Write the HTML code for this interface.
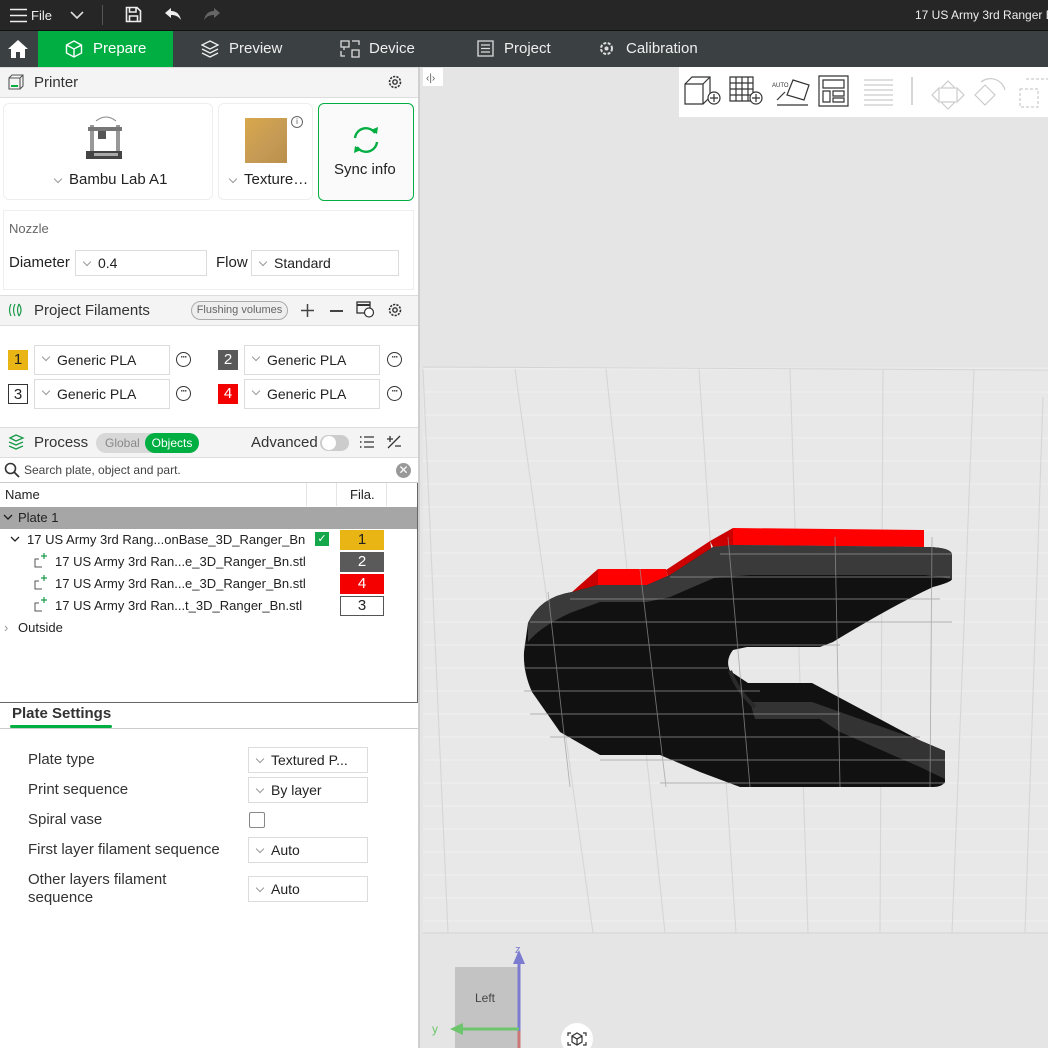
<!DOCTYPE html>
<html><head><meta charset="utf-8"><style>
*{box-sizing:border-box;margin:0;padding:0}
body{width:1048px;height:1048px;overflow:hidden;position:relative;font-family:"Liberation Sans",sans-serif;font-size:14px;color:#222;background:#fff}
.a{position:absolute}
.t{position:absolute;white-space:nowrap}
.inp{position:absolute;border:1px solid #dcdcdc;background:#fff;height:26px;line-height:24px;padding-left:22px;font-size:14px}
.inp:before{content:"";position:absolute;left:8px;top:8px;width:5px;height:5px;border-right:1px solid #999;border-bottom:1px solid #999;transform:rotate(45deg)}
.num{position:absolute;width:20px;height:20px;text-align:center;line-height:20px;font-size:15px}
.dots{position:absolute;width:15px;height:15px;border:1.5px solid #333;border-radius:50%;font-size:9px;line-height:9px;text-align:center;letter-spacing:-1px;font-weight:bold}
.hdr{position:absolute;left:0;width:418px;background:#f4f4f4;border-bottom:1px solid #ddd;border-top:1px solid #ddd}
</style></head><body>
<!-- top bar -->
<div class="a" style="left:0;top:0;width:1048px;height:31px;background:#262626"></div>
<div class="a" style="left:0;top:30px;width:1048px;height:1px;background:#111"></div>
<svg class="a" style="left:10px;top:8px" width="18" height="15"><path d="M0 1.5H17M0 7.5H17M0 13.5H17" stroke="#eee" stroke-width="1.6"/></svg>
<div class="t" style="left:31px;top:8px;color:#eee;font-size:13px">File</div>
<svg class="a" style="left:70px;top:10px" width="14" height="10"><path d="M1 2L7 8L13 2" stroke="#ddd" stroke-width="1.6" fill="none"/></svg>
<div class="a" style="left:102px;top:5px;width:1px;height:20px;background:#555"></div>
<svg class="a" style="left:125px;top:6px" width="17" height="17"><path d="M1.5 1.5H12L15.5 5V15.5H1.5Z M4.5 1.5V6H11V1.5 M4.5 15.5V10H12.5V15.5" stroke="#eee" stroke-width="1.6" fill="none"/></svg>
<svg class="a" style="left:164px;top:7px" width="18" height="14"><path d="M7 1L1 6L7 11V8C11 8 14 9 17 13C16 8 13 4 7 4Z" fill="#eee"/></svg>
<svg class="a" style="left:203px;top:7px" width="18" height="14"><path d="M11 1L17 6L11 11V8C7 8 4 9 1 13C2 8 5 4 11 4Z" fill="#666"/></svg>
<div class="t" style="left:915px;top:8px;color:#eee;font-size:12px">17 US Army 3rd Ranger Ba</div>
<!-- tab bar -->
<div class="a" style="left:0;top:31px;width:1048px;height:36px;background:#3b4143"></div>
<svg class="a" style="left:7px;top:39px" width="22" height="20"><path d="M11 1L1 10H4V19H9V13H13V19H18V10H21Z" fill="#fff"/></svg>
<div class="a" style="left:38px;top:31px;width:135px;height:36px;background:#00ae42"></div>
<svg class="a" style="left:65px;top:40px" width="18" height="18"><path d="M9 1L16.5 5V13L9 17L1.5 13V5Z M1.5 5L9 9L16.5 5 M9 9V17" stroke="#fff" stroke-width="1.4" fill="none"/></svg>
<div class="t" style="left:93px;top:40px;color:#fff;font-size:15px">Prepare</div>
<svg class="a" style="left:201px;top:40px" width="18" height="18"><path d="M9 1L17 5L9 9L1 5Z M1 9L9 13L17 9 M1 13L9 17L17 13" stroke="#eee" stroke-width="1.3" fill="none"/></svg>
<div class="t" style="left:229px;top:40px;color:#eee;font-size:15px">Preview</div>
<svg class="a" style="left:340px;top:40px" width="20" height="18"><path d="M1 1H9V7H1Z M4 7V10 M1 11V16H5 M12 1H19V5 M12 10H19V17H12Z" stroke="#ddd" stroke-width="1.3" fill="none"/></svg>
<div class="t" style="left:369px;top:40px;color:#eee;font-size:15px">Device</div>
<svg class="a" style="left:477px;top:40px" width="17" height="17"><path d="M1 1H16V16H1Z M4 5H13 M4 8.5H13 M4 12H13" stroke="#ddd" stroke-width="1.3" fill="none"/></svg>
<div class="t" style="left:504px;top:40px;color:#eee;font-size:15px">Project</div>
<svg class="a" style="left:599px;top:41px" width="15" height="15"><circle cx="7.5" cy="7.5" r="5.5" stroke="#ddd" stroke-width="2" fill="none" stroke-dasharray="3 1.5"/><circle cx="7.5" cy="7.5" r="2" fill="#ddd"/></svg>
<div class="t" style="left:626px;top:40px;color:#eee;font-size:15px">Calibration</div>

<!-- left panel -->
<div class="a" style="left:418px;top:67px;width:2px;height:981px;background:#cfcfcf"></div>
<div class="hdr" style="top:67px;height:31px"></div>
<svg class="a" style="left:8px;top:74px" width="17" height="16"><path d="M1 4H12V15H1Z M1 4L4 1H15V12L12 15 M12 4L15 1" stroke="#555" stroke-width="1.1" fill="none"/><path d="M3 12H10" stroke="#00ae42" stroke-width="2"/></svg>
<div class="t" style="left:34px;top:74px;font-size:15px;color:#333">Printer</div>
<svg class="a" style="left:387px;top:74px" width="16" height="16"><circle cx="8" cy="8" r="5.5" stroke="#333" stroke-width="1.6" fill="none" stroke-dasharray="2.2 1.2"/><circle cx="8" cy="8" r="2.2" stroke="#333" stroke-width="1.4" fill="none"/></svg>
<div class="a" style="left:3px;top:103px;width:210px;height:97px;border:1px solid #eee;border-radius:6px"></div>
<svg class="a" style="left:84px;top:115px" width="42" height="48"><path d="M12 6Q22 -2 32 6" stroke="#888" fill="none"/><rect x="6" y="10" width="4" height="32" fill="#999"/><rect x="32" y="10" width="4" height="32" fill="#999"/><rect x="4" y="12" width="34" height="4" fill="#777"/><rect x="14" y="16" width="8" height="8" fill="#555"/><rect x="2" y="36" width="36" height="8" fill="#444"/><rect x="10" y="38" width="24" height="3" fill="#aaa"/></svg>
<div class="inp" style="left:47px;top:168px;border:none;height:24px;font-size:15px">Bambu Lab A1</div>
<div class="a" style="left:218px;top:103px;width:95px;height:97px;border:1px solid #eee;border-radius:6px"></div>
<div class="a" style="left:245px;top:118px;width:42px;height:45px;background:linear-gradient(135deg,#d9a84c,#c49a55 60%,#b98f4a)"></div>
<div class="a" style="left:291px;top:116px;width:12px;height:12px;border:1.3px solid #666;border-radius:50%;font-size:8px;text-align:center;line-height:10px;color:#555">i</div>
<div class="inp" style="left:222px;top:168px;border:none;height:24px;font-size:15px;width:90px;overflow:hidden">Texture…</div>
<div class="a" style="left:318px;top:103px;width:96px;height:98px;border:1px solid #00ae42;border-radius:6px;background:#fafafa"></div>
<svg class="a" style="left:350px;top:125px" width="32" height="30"><path d="M5 13A11 11 0 0 1 25 8M27 17A11 11 0 0 1 7 22" stroke="#00ae42" stroke-width="2.4" fill="none"/><path d="M21 5L27 9L28 2Z M11 25L5 21L4 28Z" fill="#00ae42"/></svg>
<div class="t" style="left:334px;top:161px;font-size:15px">Sync info</div>
<div class="a" style="left:3px;top:210px;width:411px;height:80px;border:1px solid #eee"></div>
<div class="t" style="left:9px;top:221px;font-size:13px;color:#666">Nozzle</div>
<div class="t" style="left:9px;top:254px;font-size:15px">Diameter</div>
<div class="inp" style="left:75px;top:250px;width:132px">0.4</div>
<div class="t" style="left:216px;top:254px;font-size:15px">Flow</div>
<div class="inp" style="left:251px;top:250px;width:148px">Standard</div>

<div class="hdr" style="top:295px;height:31px"></div>
<svg class="a" style="left:8px;top:302px" width="16" height="16"><path d="M3 2Q0 8 3 14 M7 2Q4 8 7 14 M11 2Q8 8 11 14 M11 2Q15 8 11 14" stroke="#1a9a4a" stroke-width="1.2" fill="none"/></svg>
<div class="t" style="left:34px;top:302px;font-size:15px;color:#333">Project Filaments</div>
<div class="a" style="left:191px;top:301px;width:97px;height:19px;border:1px solid #aaa;border-radius:10px;background:#eee;font-size:11px;color:#666;text-align:center;line-height:17px">Flushing volumes</div>
<svg class="a" style="left:301px;top:304px" width="13" height="13"><path d="M6.5 0V13M0 6.5H13" stroke="#444" stroke-width="1.5"/></svg>
<div class="a" style="left:330px;top:310px;width:13px;height:1.6px;background:#444"></div>
<svg class="a" style="left:356px;top:301px" width="19" height="17"><rect x="1" y="1" width="13" height="11" stroke="#333" fill="none" stroke-width="1.3"/><path d="M1 4H14" stroke="#333" stroke-width="2"/><circle cx="13" cy="11.5" r="4.5" fill="#fff" stroke="#333" stroke-width="1.2"/></svg>
<svg class="a" style="left:387px;top:302px" width="16" height="16"><circle cx="8" cy="8" r="5.5" stroke="#333" stroke-width="1.6" fill="none" stroke-dasharray="2.2 1.2"/><circle cx="8" cy="8" r="2.2" stroke="#333" stroke-width="1.4" fill="none"/></svg>

<div class="num" style="left:8px;top:350px;background:#e8b514">1</div>
<div class="inp" style="left:34px;top:345px;width:136px;height:30px;line-height:28px">Generic PLA</div>
<div class="dots" style="left:176px;top:352px">···</div>
<div class="num" style="left:218px;top:350px;background:#5a5a5a;color:#fff">2</div>
<div class="inp" style="left:244px;top:345px;width:136px;height:30px;line-height:28px">Generic PLA</div>
<div class="dots" style="left:387px;top:352px">···</div>
<div class="num" style="left:8px;top:384px;border:1px solid #333;background:#fff">3</div>
<div class="inp" style="left:34px;top:379px;width:136px;height:30px;line-height:28px">Generic PLA</div>
<div class="dots" style="left:176px;top:386px">···</div>
<div class="num" style="left:218px;top:384px;background:#f50000;color:#fff">4</div>
<div class="inp" style="left:244px;top:379px;width:136px;height:30px;line-height:28px">Generic PLA</div>
<div class="dots" style="left:387px;top:386px">···</div>

<div class="hdr" style="top:427px;height:31px"></div>
<svg class="a" style="left:8px;top:434px" width="17" height="16"><path d="M2 4L8 1L15 4L8 7Z M1 8L8 11L15 8 M1 12L8 15L15 12" stroke="#1a9a4a" stroke-width="1.3" fill="none"/></svg>
<div class="t" style="left:34px;top:434px;font-size:15px;color:#333">Process</div>
<div class="a" style="left:96px;top:433px;width:103px;height:20px;border-radius:10px;background:#d8d8d8"></div>
<div class="t" style="left:105px;top:436px;font-size:12px;color:#888">Global</div>
<div class="a" style="left:145px;top:433px;width:54px;height:20px;border-radius:10px;background:#00ae42;color:#fff;font-size:12px;text-align:center;line-height:20px">Objects</div>
<div class="t" style="left:251px;top:434px;font-size:15px;color:#333">Advanced</div>
<div class="a" style="left:320px;top:435px;width:29px;height:16px;border-radius:8px;background:#ccc"></div>
<div class="a" style="left:322px;top:436px;width:14px;height:14px;border-radius:50%;background:#fff"></div>
<svg class="a" style="left:359px;top:435px" width="16" height="14"><path d="M5 2H15M5 7H15M5 12H15" stroke="#333" stroke-width="1.3"/><path d="M1 2H2.5M1 7H2.5M1 12H2.5" stroke="#333" stroke-width="1.6"/></svg>
<svg class="a" style="left:386px;top:434px" width="16" height="16"><path d="M2 14L14 2 M1 5H7 M4 2V8 M9 12H15" stroke="#333" stroke-width="1.3"/></svg>

<div class="a" style="left:0;top:459px;width:418px;height:24px;border-bottom:1px solid #ccc;background:#fff"></div>
<svg class="a" style="left:4px;top:462px" width="16" height="16"><circle cx="6.5" cy="6.5" r="5" stroke="#333" stroke-width="1.6" fill="none"/><path d="M10 10L15 15" stroke="#333" stroke-width="1.8"/></svg>
<div class="t" style="left:24px;top:463px;font-size:12px;color:#444">Search plate, object and part.</div>
<div class="a" style="left:396px;top:463px;width:15px;height:15px;border-radius:50%;background:#999;color:#fff;font-size:12px;line-height:15px;text-align:center">✕</div>

<div class="a" style="left:0;top:483px;width:418px;height:220px;border-right:1px solid #666;border-bottom:1px solid #666"></div>
<div class="t" style="left:5px;top:487px;font-size:13px">Name</div>
<div class="a" style="left:306px;top:483px;width:1px;height:23px;background:#e4e4e4"></div>
<div class="a" style="left:336px;top:483px;width:1px;height:23px;background:#e4e4e4"></div>
<div class="a" style="left:386px;top:483px;width:1px;height:23px;background:#e4e4e4"></div>
<div class="t" style="left:350px;top:487px;font-size:13px">Fila.</div>
<div class="a" style="left:0;top:507px;width:417px;height:22px;background:#a6a6a6"></div>
<svg class="a" style="left:3px;top:514px" width="10" height="8"><path d="M1 1L5 5L9 1" stroke="#222" stroke-width="1.4" fill="none"/></svg>
<div class="t" style="left:18px;top:510px;font-size:13px">Plate 1</div>
<svg class="a" style="left:10px;top:536px" width="10" height="8"><path d="M1 1L5 5L9 1" stroke="#222" stroke-width="1.3" fill="none"/></svg>
<div class="t" style="left:27px;top:532px;font-size:13px">17 US Army 3rd Rang...onBase_3D_Ranger_Bn</div>
<div class="a" style="left:315px;top:532px;width:14px;height:14px;background:#14a84b;color:#fff;font-size:11px;line-height:14px;text-align:center">✓</div>
<div class="a" style="left:340px;top:530px;width:44px;height:20px;background:#e8b514;text-align:center;font-size:15px;line-height:20px">1</div>
<svg class="a" style="left:33px;top:552px" width="16" height="16"><path d="M9 15H2V7H6" stroke="#555" fill="none"/><path d="M11 1V7M8 4H14" stroke="#1a9a4a" stroke-width="1.2"/></svg>
<div class="t" style="left:55px;top:554px;font-size:13px">17 US Army 3rd Ran...e_3D_Ranger_Bn.stl</div>
<div class="a" style="left:340px;top:552px;width:44px;height:20px;background:#5a5a5a;color:#fff;text-align:center;font-size:15px;line-height:20px">2</div>
<svg class="a" style="left:33px;top:574px" width="16" height="16"><path d="M9 15H2V7H6" stroke="#555" fill="none"/><path d="M11 1V7M8 4H14" stroke="#1a9a4a" stroke-width="1.2"/></svg>
<div class="t" style="left:55px;top:576px;font-size:13px">17 US Army 3rd Ran...e_3D_Ranger_Bn.stl</div>
<div class="a" style="left:340px;top:574px;width:44px;height:20px;background:#f50000;color:#fff;text-align:center;font-size:15px;line-height:20px">4</div>
<svg class="a" style="left:33px;top:596px" width="16" height="16"><path d="M9 15H2V7H6" stroke="#555" fill="none"/><path d="M11 1V7M8 4H14" stroke="#1a9a4a" stroke-width="1.2"/></svg>
<div class="t" style="left:55px;top:598px;font-size:13px">17 US Army 3rd Ran...t_3D_Ranger_Bn.stl</div>
<div class="a" style="left:340px;top:596px;width:44px;height:20px;border:1px solid #555;text-align:center;font-size:15px;line-height:18px">3</div>
<div class="t" style="left:4px;top:620px;font-size:13px;color:#999">›</div>
<div class="t" style="left:18px;top:620px;font-size:13px">Outside</div>

<div class="t" style="left:12px;top:705px;font-size:15px;font-weight:bold;color:#333">Plate Settings</div>
<div class="a" style="left:10px;top:725px;width:102px;height:3px;background:#00ae42;border-radius:2px"></div>
<div class="a" style="left:0;top:728px;width:418px;height:1px;background:#ccc"></div>
<div class="t" style="left:28px;top:751px;font-size:15px;color:#333">Plate type</div>
<div class="inp" style="left:248px;top:747px;width:120px">Textured P...</div>
<div class="t" style="left:28px;top:781px;font-size:15px;color:#333">Print sequence</div>
<div class="inp" style="left:248px;top:777px;width:120px">By layer</div>
<div class="t" style="left:28px;top:811px;font-size:15px;color:#333">Spiral vase</div>
<div class="a" style="left:249px;top:812px;width:16px;height:16px;border:1px solid #888;border-radius:2px"></div>
<div class="t" style="left:28px;top:841px;font-size:15px;color:#333">First layer filament sequence</div>
<div class="inp" style="left:248px;top:837px;width:120px">Auto</div>
<div class="t" style="left:28px;top:871px;font-size:15px;color:#333;line-height:18px">Other layers filament<br>sequence</div>
<div class="inp" style="left:248px;top:876px;width:120px">Auto</div>

<!-- viewport -->
<svg class="a" style="left:420px;top:67px" width="628" height="981">
<rect width="628" height="981" fill="#e5e5e5"/>
<rect x="3" y="300" width="625" height="566" fill="#e8e8e8"/>
<g stroke="#f1f1f1" stroke-width="1.1">
<path d="M3 302H628 M3 325H628 M3 348H628 M3 371H628 M3 394H628 M3 417H628 M3 440H628 M3 463H628 M3 486H628 M3 509H628 M3 532H628 M3 555H628 M3 578H628 M3 601H628 M3 624H628 M3 647H628 M3 670H628 M3 693H628 M3 716H628 M3 739H628 M3 762H628 M3 785H628 M3 808H628 M3 831H628 M3 854H628"/>
</g>
<g stroke="#d4d4d4" stroke-width="1"><path d="M3 300L628 303 M3 866L628 866"/></g>
<g stroke="#d6d6d6" stroke-width="1.1">
<path d="M3 302L28 866 M95 302L173 866 M186 302L245 866 M279 302L316 866 M370 302L388 866 M463 302L460 866 M554 302L532 866 M623 330L605 866"/>
</g>
<!-- toolbar -->
<rect x="259" y="0" width="369" height="50" fill="#fff"/>
<rect x="3" y="1" width="20" height="18" fill="#fff"/>
<text x="6" y="14" font-size="10" fill="#555" font-family="Liberation Sans">‹|›</text>
<g stroke="#333" stroke-width="1.2" fill="none">
<path d="M265 17L272 10H290V30L283 37H265Z M265 17H283V37 M283 17L290 10"/><circle cx="294" cy="31" r="6" fill="#fff"/><path d="M294 27V35M290 31H298"/>
<path d="M310 10H333V34H310Z M310 16H333M310 22H333M310 28H333M316 10V34M322 10V34M328 10V34"/><circle cx="336" cy="31" r="6" fill="#fff"/><path d="M336 27V35M332 31H340"/>
<path d="M373 13L389 18L384 33L367 28Z M357 38H388 M365 25L357 33"/>
<path d="M399 9H428V39H399Z M403 13H424V21H403Z M403 24H410V35H403Z M413 24H424V29H413Z M413 31H424V35H413Z"/>
</g>
<text x="352" y="20" font-size="6" fill="#333" font-family="Liberation Sans">AUTO</text>
<g stroke="#ccc" stroke-width="1.2" fill="none"><path d="M444 13H473M444 18H473M444 23H473M444 28H473M444 33H473M444 38H473"/>
<path d="M492 10V38" stroke="#bbb"/>
<path d="M528 14L521 21H535Z M528 42L521 35H535Z M512 28L519 21V35Z M544 28L537 21V35Z"/>
<path d="M565 18L575 28L565 38L555 28Z M561 15A15 15 0 0 1 585 23"/>
<path d="M600 22H618V40H600Z M606 12H628" stroke-dasharray="3 2"/></g>
<!-- model -->
<polygon points="313,461 504,463 504,480 313,478" fill="#ff0000"/>
<polygon points="290,474 313,461 313,478 293,480" fill="#cc0000"/>
<polygon points="246,503 290,474 293,490 250,515" fill="#cc0000"/>
<polygon points="178,502 246,502 250,518 178,518" fill="#ff0000"/>
<polygon points="152,525 178,502 178,520 155,535" fill="#cc0000"/>
<polygon points="313,616 392,618 392,635 333,635" fill="#ff0000"/>
<polygon points="392,618 499,673 499,687 392,635" fill="#bb0000"/>
<path d="M313 478L504 480Q532 480 532 488V512Q532 515 513 520Q470 540 413 575L400 580H327L313 583Q305 593 310 604L328 616H392L499 673L525 684V715Q522 720 513 720H320L280 705L240 688H180L140 665L112 625Q103 605 104 585L108 556Q120 530 152 525L178 518H227L250 508L293 480Z" fill="#111"/>
<path d="M313 478L504 480Q532 480 532 488V512L505 508H330L294 511L250 530L227 535H180L150 546Q120 560 108 575L108 556Q120 530 152 525L178 518H227L250 508L293 480Z" fill="#3a3a3a"/>
<path d="M330 635H392L499 673L525 684V712L500 700L420 665L400 652H335Z" fill="#333"/>
<path d="M310 604Q318 625 335 640" stroke="#2a2a2a" stroke-width="4" fill="none"/>
<g stroke="#9a9a9a" stroke-width="0.9" opacity="0.7">
<path d="M110 555H532 M104 578H420 M104 601H308 M104 624H340 M110 647H420 M130 670H500 M180 693H525 M240 716H525 M150 532H520 M250 510H530 M300 487H532"/>
<path d="M128 525L150 720 M220 502L246 720 M308 470L330 720 M415 470L420 720 M512 470L510 720"/>
</g>
<!-- nav cube -->
<rect x="35" y="900" width="65" height="81" fill="#c3c3c3"/>
<text x="55" y="935" font-size="12" fill="#444" font-family="Liberation Sans">Left</text>
<path d="M99 966V893" stroke="#7b7bd0" stroke-width="3"/><path d="M99 883L93 897H105Z" fill="#7b7bd0"/>
<text x="95" y="886" font-size="11" fill="#7b7bd0" font-family="Liberation Sans">z</text>
<path d="M99 962H40" stroke="#6cc46c" stroke-width="3"/><path d="M30 962L43 956V968Z" fill="#6cc46c"/>
<text x="12" y="966" font-size="12" fill="#6cc46c" font-family="Liberation Sans">y</text>
<path d="M99 964V981" stroke="#c77" stroke-width="3"/>
<circle cx="157" cy="972" r="16" fill="#fff"/>
<path d="M151 966H148V969M163 966H166V969M151 978H148V975M163 978H166V975 M157 966L162 969V975L157 978L152 975V969Z M152 969L157 972L162 969M157 972V978" stroke="#333" stroke-width="1.2" fill="none"/>
</svg>
</body></html>
